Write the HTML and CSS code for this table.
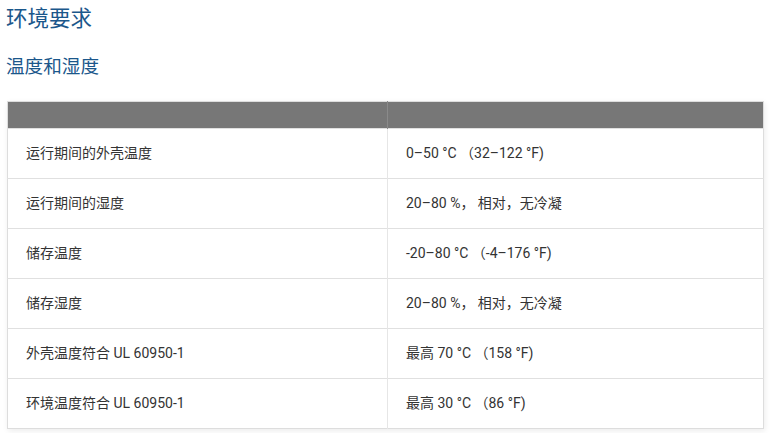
FILE: index.html
```html
<!DOCTYPE html>
<html lang="zh-CN">
<head>
  <meta charset="UTF-8">
  <meta name="viewport" content="width=device-width, initial-scale=1.0">
  <title>环境要求</title>
  <link rel="stylesheet" href="styles.css">
</head>
<body>
  <h1>环境要求</h1>
  <h2>温度和湿度</h2>

  <table class="spec-table">
    <thead>
      <tr><th></th><th></th></tr>
    </thead>
    <tbody>
      <tr><td>运行期间的外壳温度</td><td>0–50 °C （32–122 °F)</td></tr>
      <tr><td>运行期间的湿度</td><td>20–80 %， 相对，无冷凝</td></tr>
      <tr><td>储存温度</td><td>-20–80 °C （-4–176 °F)</td></tr>
      <tr><td>储存湿度</td><td>20–80 %， 相对，无冷凝</td></tr>
      <tr><td>外壳温度符合 UL 60950-1</td><td>最高 70 °C （158 °F)</td></tr>
      <tr><td>环境温度符合 UL 60950-1</td><td>最高 30 °C （86 °F)</td></tr>
    </tbody>
  </table>
</body>
</html>
```

FILE: styles.css
```css
body {
  margin: 0;
  padding: 4px 6px;
  font-family: Roboto, "Noto Sans CJK SC", sans-serif;
  color: #333;
  background: #fff;
}
h1, h2 {
  font-family: "Noto Sans CJK SC", sans-serif;
  font-weight: normal;
  color: #1b578b;
  margin: 0;
}
h1 {
  font-size: 21.5px;
  line-height: 26px;
  margin-bottom: 23px;
}
h2 {
  font-size: 18.6px;
  line-height: 24px;
  margin-bottom: 24px;
}
.spec-table {
  width: 757px;
  margin-left: 1px;
  border-collapse: collapse;
  border: 1px solid #ddd;
  box-shadow: 1px 2px 6px rgba(0, 0, 0, 0.08);
  font-size: 14px;
}
.spec-table th {
  background-color: #777;
  height: 26px;
  padding: 0;
  border-left: 1px solid #8a8a8a;
}
.spec-table td {
  height: 45px;
  padding: 0 18px 4px;
  border-top: 1px solid #e0e0e0;
  border-left: 1px solid #e6e6e6;
  vertical-align: middle;
}
.spec-table th:first-child,
.spec-table td:first-child {
  width: 343px;
  border-left: none;
}
```
